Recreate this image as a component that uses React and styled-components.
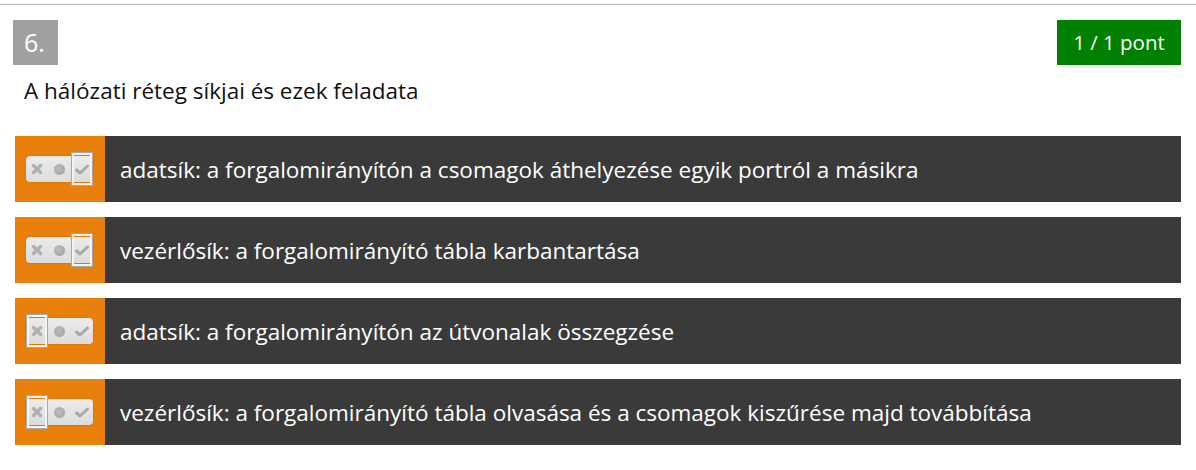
import styled, { createGlobalStyle } from "styled-components";

const GlobalStyle = createGlobalStyle`
  body {
    margin: 0;
    background: #fff;
    font-family: "Open Sans", "Noto Sans", sans-serif;
  }
`;

const answers = [
    { text: "adatsík: a forgalomirányítón a csomagok áthelyezése egyik portról a másikra", value: "yes" },
    { text: "vezérlősík: a forgalomirányító tábla karbantartása", value: "yes" },
    { text: "adatsík: a forgalomirányítón az útvonalak összegzése", value: "no" },
    { text: "vezérlősík: a forgalomirányító tábla olvasása és a csomagok kiszűrése majd továbbítása", value: "no" },
];

const Toggle = ({ value }) => {
    return (
        <ToggleWrap>
            <Pill>
                <Slot>
                    <svg width="12" height="12" viewBox="0 0 12 12">
                        <path d="M2.5 2.5 L9.5 9.5 M9.5 2.5 L2.5 9.5" stroke="#b0b0b0" strokeWidth="3.4" strokeLinecap="round"/>
                    </svg>
                </Slot>
                <Slot>
                    <Dot/>
                </Slot>
                <Slot>
                    <svg width="16" height="13" viewBox="0 0 16 13">
                        <path d="M2.5 7 L6 10 L13.5 3" stroke="#a8a8a8" strokeWidth="3" fill="none" strokeLinecap="round" strokeLinejoin="round"/>
                    </svg>
                </Slot>
            </Pill>
            <Selected pos={value}/>
        </ToggleWrap>
    );
};

export default function App() {
    return (
        <Container>
            <GlobalStyle/>
            <Header>
                <Number>6.</Number>
                <Score>1 / 1 pont</Score>
            </Header>
            <Question>A hálózati réteg síkjai és ezek feladata</Question>
            <List>
                {answers.map((a, i) => (
                    <Row key={i}>
                        <Side>
                            <Toggle value={a.value}/>
                        </Side>
                        <Label>{a.text}</Label>
                    </Row>
                ))}
            </List>
        </Container>
    );
}

const Container = styled.div`
  margin-top: 4px;
  border-top: 1px solid #b4b4b4;
  padding: 15px 15px 0 13px;
`;

const Header = styled.div`
  display: flex;
  justify-content: space-between;
  align-items: flex-start;
`;

const Number = styled.div`
  background: #a0a0a0;
  color: #fff;
  font-size: 25px;
  height: 45px;
  width: 45px;
  box-sizing: border-box;
  padding-left: 11px;
  line-height: 45px;
`;

const Score = styled.div`
  background: #008000;
  color: #fff;
  font-size: 20.5px;
  height: 45px;
  width: 124px;
  line-height: 45px;
  text-align: center;
`;

const Question = styled.div`
  font-size: 22.5px;
  color: #111;
  padding: 10px 0 0 11px;
  height: 71px;
  box-sizing: border-box;
`;

const List = styled.div`
  display: flex;
  flex-direction: column;
  gap: 15px;
  padding-left: 2px;
`;

const Row = styled.div`
  display: flex;
  height: 66px;
  background: #3a3a3a;
`;

const Side = styled.div`
  width: 90px;
  background: #ea800c;
  display: flex;
  align-items: center;
  padding-left: 11px;
  box-sizing: border-box;
`;

const Label = styled.div`
  color: #fff;
  font-size: 22.5px;
  display: flex;
  align-items: center;
  padding-left: 15px;
`;

const ToggleWrap = styled.div`
  position: relative;
  width: 67px;
  height: 26px;
`;

const Pill = styled.div`
  display: flex;
  width: 67px;
  height: 26px;
  border-radius: 4px;
  background: linear-gradient(#ececec, #dcdcdc);
  box-shadow: 0 0 2px rgba(0, 0, 0, 0.25);
`;

const Slot = styled.div`
  flex: 1;
  display: flex;
  align-items: center;
  justify-content: center;
`;

const Dot = styled.div`
  width: 11px;
  height: 11px;
  border-radius: 50%;
  background: radial-gradient(circle at 40% 40%, #bcbcbc, #a0a0a0);
`;

const Selected = styled.div`
  position: absolute;
  top: -4px;
  ${(props) => (props.pos === "yes" ? "right: 0;" : "left: 0;")}
  width: 22px;
  height: 34px;
  box-sizing: border-box;
  border: 1px solid #a8a8a8;
  box-shadow: inset 0 0 0 2px #f4f4f4;
`;
